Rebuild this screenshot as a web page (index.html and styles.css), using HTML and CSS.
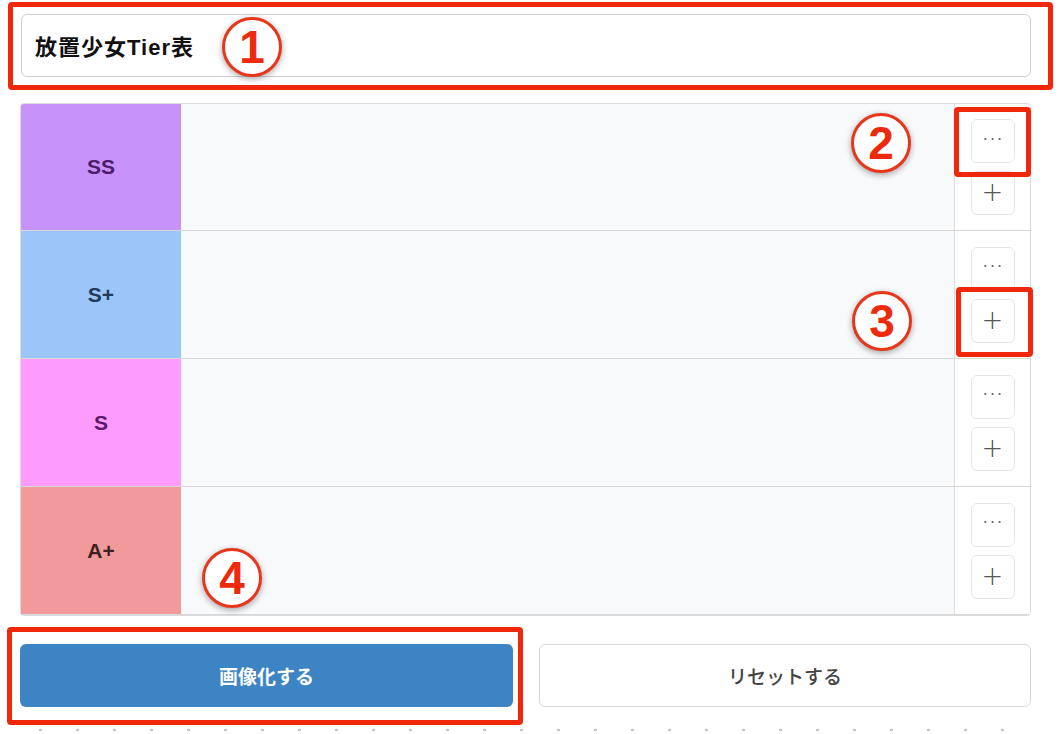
FILE: index.html
```html
<!DOCTYPE html>
<html lang="ja">
<head>
<meta charset="utf-8">
<title>放置少女Tier表</title>
<link rel="stylesheet" href="styles.css">
</head>
<body>
<div class="page">
  <div class="title-wrap">
    <div class="title-box">放置少女Tier表</div>
    <div class="mark-box mark-title"></div>
    <div class="badge badge-1">1</div>
  </div>

  <div class="tier-table">
    <div class="tier-row">
      <div class="tier-label tier-ss">SS</div>
      <div class="tier-items"></div>
      <div class="tier-actions">
        <button class="act-btn act-more">···</button>
        <button class="act-btn act-add">+</button>
      </div>
    </div>
    <div class="tier-row">
      <div class="tier-label tier-splus">S+</div>
      <div class="tier-items"></div>
      <div class="tier-actions">
        <button class="act-btn act-more">···</button>
        <button class="act-btn act-add">+</button>
      </div>
    </div>
    <div class="tier-row">
      <div class="tier-label tier-s">S</div>
      <div class="tier-items"></div>
      <div class="tier-actions">
        <button class="act-btn act-more">···</button>
        <button class="act-btn act-add">+</button>
      </div>
    </div>
    <div class="tier-row">
      <div class="tier-label tier-aplus">A+</div>
      <div class="tier-items"></div>
      <div class="tier-actions">
        <button class="act-btn act-more">···</button>
        <button class="act-btn act-add">+</button>
      </div>
    </div>
    <div class="mark-box mark-more"></div>
    <div class="mark-box mark-add"></div>
    <div class="badge badge-2">2</div>
    <div class="badge badge-3">3</div>
    <div class="badge badge-4">4</div>
  </div>

  <div class="bottom-buttons">
    <div class="btn-cell">
      <button class="main-btn btn-primary">画像化する</button>
      <div class="mark-box mark-image"></div>
    </div>
    <div class="btn-cell">
      <button class="main-btn btn-reset">リセットする</button>
    </div>
  </div>
  <div class="dots"></div>
</div>
</body>
</html>
```
FILE: styles.css
```css
* { box-sizing: border-box; }
html, body { margin: 0; padding: 0; background: #fff; }
body {
  font-family: "Liberation Sans", "Noto Sans CJK JP", sans-serif;
  color: #222;
  width: 1060px;
  height: 734px;
  overflow: hidden;
}
.page {
  position: relative;
  padding: 14px 29px 0 20px;
}
.title-wrap { position: relative; }
.title-box {
  height: 63px;
  border: 1px solid #cfcfcf;
  border-radius: 6px;
  margin-left: 1px;
  padding: 0 0 2px 13px;
  display: flex;
  align-items: center;
  font-size: 22px;
  letter-spacing: 1px;
  font-weight: 700;
  color: #111;
}
.mark-box {
  position: absolute;
  border: 5px solid #f0270b;
  border-radius: 4px;
  pointer-events: none;
}
.mark-title { left: -12px; top: -12px; width: 1045px; height: 88px; }
.badge {
  position: absolute;
  width: 60px;
  height: 60px;
  border-radius: 50%;
  background: #fff;
  border: 3px solid #e8361a;
  box-shadow: 0 2px 6px rgba(0,0,0,0.35);
  color: #ee2a0c;
  font-family: "Liberation Sans", sans-serif;
  font-weight: 700;
  font-size: 46px;
  line-height: 54px;
  text-align: center;
}
.badge-1 { left: 202px; top: 3px; }
.tier-table {
  position: relative;
  margin-top: 26px;
  border: 1px solid #dcdcdc;
  border-radius: 4px;
  background: #f8f9fa;
}
.tier-row {
  display: flex;
  height: 128px;
  border-bottom: 1px solid #d8d8d8;
}
.tier-row:first-child { height: 127px; }
.tier-row:last-of-type { border-bottom: none; height: 127px; }
.tier-label {
  width: 160px;
  flex: none;
  display: flex;
  align-items: center;
  justify-content: center;
  font-size: 21px;
  font-weight: 700;
}
.tier-row:first-child .tier-label { border-top-left-radius: 3px; }
.tier-row:last-of-type .tier-label { border-bottom-left-radius: 3px; }
.tier-ss { background: #c893f9; color: #4b1d6b; }
.tier-splus { background: #9cc5f8; color: #1f3a5a; }
.tier-s { background: #fd9bfe; color: #5a1a6c; }
.tier-aplus { background: #f29a9b; color: #3b2220; }
.tier-items { flex: 1; background: #f8f9fa; }
.tier-actions {
  width: 76px;
  flex: none;
  background: #fff;
  border-left: 1px solid #dcdcdc;
  display: flex;
  flex-direction: column;
  align-items: center;
  justify-content: center;
  gap: 8px;
}
.tier-row:first-child .tier-actions { border-top-right-radius: 3px; }
.tier-row:last-of-type .tier-actions { border-bottom-right-radius: 3px; }
.act-btn {
  width: 44px;
  height: 44px;
  border: 1px solid #e6e6e6;
  border-radius: 6px;
  background: #fff;
  color: #555;
  padding: 0;
  font-family: "DejaVu Sans", sans-serif;
  cursor: pointer;
}
.act-more { font-size: 16px; letter-spacing: 2px; color: #666; padding: 0 0 4px 2px; }
.act-add { font-size: 26px; font-weight: 300; line-height: 1; padding-bottom: 2px; }
.mark-more { left: 933px; top: 3px; width: 77px; height: 70px; }
.mark-add { left: 935px; top: 183px; width: 77px; height: 70px; }
.badge-2 { left: 830px; top: 9px; }
.badge-3 { left: 831px; top: 187px; }
.badge-4 { left: 181px; top: 444px; }
.bottom-buttons {
  display: grid;
  grid-template-columns: 493px 492px;
  column-gap: 26px;
  margin-top: 28px;
}
.btn-cell { position: relative; }
.main-btn {
  width: 100%;
  height: 63px;
  border-radius: 6px;
  font-family: "Noto Sans CJK JP", sans-serif;
  font-size: 19px;
  font-weight: 700;
  cursor: pointer;
}
.btn-primary { background: #3d84c4; color: #fff; border: none; }
.btn-reset { background: #fff; color: #444; border: 1px solid #d8d8d8; font-weight: 500; }
.mark-image { left: -13px; top: -17px; width: 516px; height: 98px; }
.dots {
  margin-top: 21px;
  height: 4px;
  margin-left: 2px;
  background-image: radial-gradient(circle, #c4c4c4 1.2px, transparent 1.6px);
  background-size: 37px 4px;
  background-position: 0 0;
}
```
